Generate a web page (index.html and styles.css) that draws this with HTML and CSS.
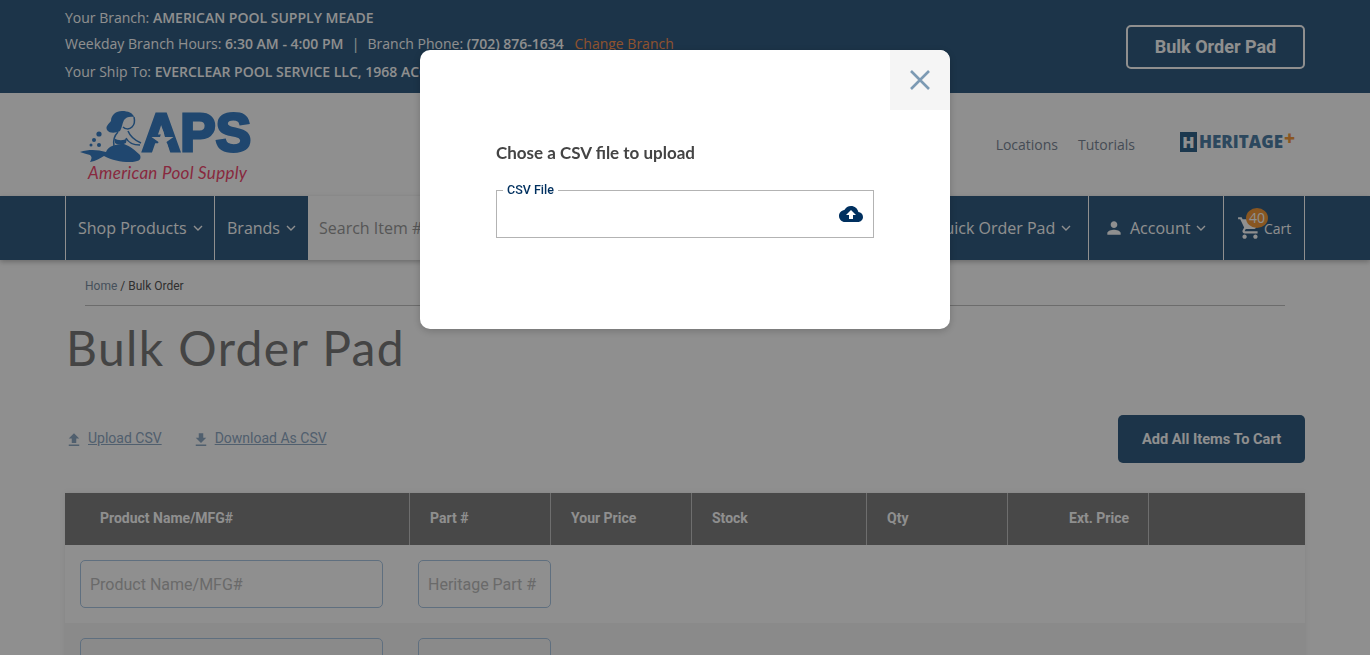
FILE: index.html
```html
<!DOCTYPE html>
<html>
    <head>
        <title> Bulk Order Pad </title>
        <link rel="stylesheet" href="styles.css">
    </head>
    <body>
        <div class="topbar">
            <div class="branch-info">
                <div class="info-line">Your Branch: <b>AMERICAN POOL SUPPLY MEADE</b></div>
                <div class="info-line hours-line">Weekday Branch Hours: <b>6:30 AM - 4:00 PM</b> <span class="sep">|</span> Branch Phone: <b>(702) 876-1634</b> <a class="change-link">Change Branch</a></div>
                <div class="info-line">Your Ship To: <b>EVERCLEAR POOL SERVICE LLC, 1968 ACCESS WAY</b></div>
            </div>
            <a class="bulk-button">Bulk Order Pad</a>
        </div>

        <div class="logo-row">
            <svg class="logo" width="176" height="92" viewBox="0 -12 176 92">
                <path class="logo-blue" d="M2 44C12 41 20 42 28 44C30 38 38 36 46 36C52 38 58 43 62 47C64 52 60 54 52 54C42 54 34 52 26 48C22 50 18 53 12 54C14 50 14 49 12 47C8 46 5 45 2 44Z"/>
                <path class="logo-blue" d="M29 22C27 18 31 16 33 13C33 7 38 3 44 3C50 3 55 5 56 9C52 8 48 9 46 12C44 16 44 20 42 23C38 25 32 26 29 22Z"/>
                <path class="logo-blue" d="M36 30C40 33 46 33 49 30L48 35C44 37 40 37 37 35Z"/>
                <path class="logo-line" d="M56 9C57 13 56 17 54 19C51 22 47 21 45 19M40 24C36 28 35 33 36 38M50 23C52 28 56 32 63 35M48 30C50 34 55 37 62 37"/>
                <circle class="logo-blue" cx="21" cy="26" r="2.6"/>
                <circle class="logo-blue" cx="16" cy="32" r="2"/>
                <circle class="logo-blue" cx="21" cy="37" r="2"/>
                <circle class="logo-blue" cx="13" cy="37" r="1.5"/>
                <text class="logo-aps" x="64" y="43" textLength="109" lengthAdjust="spacingAndGlyphs">APS</text>
                <polygon class="logo-star" points="84.5,21 87,29 95.5,29 88.5,34 91,42 84.5,37 78,42 80.5,34 73.5,29 82,29"/>
                <text class="logo-name" x="10" y="71" textLength="159">American Pool Supply</text>
            </svg>
            <div class="top-links">
                <a>Locations</a>
                <a>Tutorials</a>
            </div>
            <div class="heritage">
                <span class="heritage-box">H</span><span class="heritage-text">HERITAGE</span><span class="heritage-plus">+</span>
            </div>
        </div>

        <div class="nav">
            <div class="nav-cell shop">Shop Products <svg class="chev" viewBox="0 0 12 12"><path d="M2 4l4 4 4-4"/></svg></div>
            <div class="nav-cell brands">Brands <svg class="chev" viewBox="0 0 12 12"><path d="M2 4l4 4 4-4"/></svg></div>
            <div class="nav-search">Search Item #</div>
            <div class="nav-cell quick">Quick Order Pad <svg class="chev" viewBox="0 0 12 12"><path d="M2 4l4 4 4-4"/></svg></div>
            <div class="nav-cell account">
                <svg class="person" viewBox="0 0 24 24"><path d="M12 12c2.21 0 4-1.79 4-4s-1.79-4-4-4-4 1.79-4 4 1.79 4 4 4zm0 2c-2.67 0-8 1.34-8 4v2h16v-2c0-2.66-5.33-4-8-4z"/></svg>
                Account <svg class="chev" viewBox="0 0 12 12"><path d="M2 4l4 4 4-4"/></svg>
            </div>
            <div class="nav-cell cart">
                <svg class="cart-icon" viewBox="0 0 24 24"><path d="M7 18c-1.1 0-1.99.9-1.99 2S5.9 22 7 22s2-.9 2-2-.9-2-2-2zM1 2v2h2l3.6 7.59-1.35 2.45c-.16.28-.25.61-.25.96 0 1.1.9 2 2 2h12v-2H7.42c-.14 0-.25-.11-.25-.25l.03-.12.9-1.63h7.45c.75 0 1.41-.41 1.75-1.03l3.58-6.49c.08-.14.12-.31.12-.48 0-.55-.45-1-1-1H5.21l-.94-2H1zm16 16c-1.1 0-1.99.9-1.99 2s.89 2 1.99 2 2-.9 2-2-.9-2-2-2z"/></svg>
                <span class="cart-badge">40</span>
                <span class="cart-text">Cart</span>
            </div>
        </div>

        <div class="content">
            <div class="breadcrumb"><a>Home</a> / <span>Bulk Order</span></div>
            <h1>Bulk Order Pad</h1>

            <div class="actions">
                <a class="action-link"><svg viewBox="0 0 24 24"><path d="M9 16h6v-6h4l-7-7-7 7h4zm-4 2h14v2H5z"/></svg><span>Upload CSV</span></a>
                <a class="action-link"><svg viewBox="0 0 24 24"><path d="M19 9h-4V3H9v6H5l7 7 7-7zM5 18v2h14v-2H5z"/></svg><span>Download As CSV</span></a>
                <a class="add-all">Add All Items To Cart</a>
            </div>

            <div class="order-table">
                <div class="table-head">
                    <div class="th first">Product Name/MFG#</div>
                    <div class="th">Part #</div>
                    <div class="th">Your Price</div>
                    <div class="th">Stock</div>
                    <div class="th">Qty</div>
                    <div class="th price">Ext. Price</div>
                    <div class="th last"></div>
                </div>
                <div class="table-row">
                    <div class="field name-field">Product Name/MFG#</div>
                    <div class="field part-field">Heritage Part #</div>
                </div>
                <div class="table-row alt">
                    <div class="field name-field"></div>
                    <div class="field part-field"></div>
                </div>
            </div>
        </div>

        <div class="overlay">
            <div class="modal">
                <div class="modal-close">
                    <svg viewBox="0 0 20 20" width="20" height="20"><path d="M1 1l18 18M19 1L1 19"/></svg>
                </div>
                <h3>Chose a CSV file to upload</h3>
                <fieldset class="file-box">
                    <legend>CSV File</legend>
                    <svg class="cloud" viewBox="0 0 24 24"><path d="M19.35 10.04C18.67 6.59 15.64 4 12 4 9.11 4 6.6 5.64 5.35 8.04 2.34 8.36 0 10.91 0 14c0 3.31 2.69 6 6 6h13c2.76 0 5-2.24 5-5 0-2.64-2.05-4.78-4.65-4.96zM14 13v4h-4v-4H7l5-5 5 5h-3z"/></svg>
                </fieldset>
            </div>
        </div>
    </body>
</html>
```

FILE: styles.css
```css
html, body {
    height: 655px;
    overflow: hidden;
}
body {
    margin: 0;
    font-family: "Open Sans", sans-serif;
    background-color: #ffffff;
    color: #7d7d7d;
}
a {
    color: inherit;
}

.topbar {
    height: 93px;
    box-sizing: border-box;
    padding: 4px 65px 0;
    display: flex;
    justify-content: space-between;
    background-color: #325d82;
    color: #ffffff;
    font-size: 14px;
}
.info-line {
    height: 27px;
    line-height: 27px;
    white-space: nowrap;
}
.info-line b {
    font-weight: 600;
}
.hours-line {
    height: 28px;
    margin-top: -1px;
}
.sep {
    margin: 0 4.5px;
}
.change-link {
    margin-left: 7px;
    color: #ff9452;
}
.bulk-button {
    width: 179px;
    height: 44px;
    margin-top: 21px;
    box-sizing: border-box;
    border: 2px solid #ffffff;
    border-radius: 5px;
    text-align: center;
    line-height: 40px;
    font-family: Roboto, sans-serif;
    font-weight: 700;
    font-size: 18px;
}

.logo-row {
    height: 102px;
    box-sizing: border-box;
    padding: 3px 65px 0 78px;
    display: flex;
}
.logo-blue {
    fill: #397fc6;
}
.logo-line {
    fill: none;
    stroke: #397fc6;
    stroke-width: 1.5;
}
.logo-aps {
    font-family: "Liberation Sans", sans-serif;
    font-weight: 700;
    font-size: 54px;
    fill: #397fc6;
    stroke: #397fc6;
    stroke-width: 3;
}
.logo-star {
    fill: #ffffff;
}
.logo-name {
    font-family: Lato, sans-serif;
    font-style: italic;
    font-size: 17px;
    fill: #f24a70;
}
.top-links {
    margin-left: auto;
    padding-top: 39px;
    display: flex;
    gap: 20px;
    font-size: 14px;
    color: #7c8898;
}
.heritage {
    width: 125px;
    margin-left: 45px;
    padding-top: 36px;
    display: flex;
    align-items: flex-start;
    font-family: "Open Sans", sans-serif;
    font-weight: 800;
    color: #4f80a8;
}
.heritage-box {
    width: 17px;
    height: 20px;
    margin-right: 2px;
    background-color: #33648c;
    color: #ffffff;
    font-size: 16px;
    line-height: 20px;
    text-align: center;
}
.heritage-text {
    font-size: 17px;
    line-height: 20px;
}
.heritage-plus {
    margin-top: -4px;
    margin-left: 1px;
    color: #f49a3c;
    font-size: 19px;
    line-height: 20px;
}

.nav {
    height: 64px;
    margin-top: 1px;
    padding: 0 65px;
    display: flex;
    background-color: #325d82;
    color: #ffffff;
    font-size: 16px;
    box-shadow: 0 2px 5px rgba(0, 0, 0, 0.25);
}
.nav-cell {
    flex: none;
    display: flex;
    align-items: center;
    box-sizing: border-box;
    border-right: 1px solid #ffffff;
    white-space: nowrap;
}
.shop {
    width: 150px;
    padding-left: 12px;
    border-left: 1px solid #ffffff;
}
.brands {
    width: 93px;
    padding-left: 12px;
    border-right: none;
}
.nav-search {
    flex: none;
    width: 622px;
    box-sizing: border-box;
    padding-left: 11px;
    line-height: 64px;
    background-color: #ffffff;
    color: #9a9a9a;
}
.quick {
    width: 159px;
    padding-left: 2px;
}
.account {
    width: 135px;
    padding-left: 15px;
}
.cart {
    width: 81px;
    padding-left: 13px;
    position: relative;
    font-size: 14px;
}
.cart-text {
    margin-left: 1px;
}
.chev {
    width: 12px;
    height: 12px;
    margin-left: 5px;
    fill: none;
    stroke: #ffffff;
    stroke-width: 1.4;
}
.person {
    width: 20px;
    height: 20px;
    margin-right: 6px;
    fill: #ffffff;
}
.cart-icon {
    width: 26px;
    height: 26px;
    fill: #ffffff;
}
.cart-badge {
    position: absolute;
    left: 22px;
    top: 12px;
    width: 22px;
    height: 20px;
    border-radius: 50%;
    background-color: #f39a3c;
    color: #ffffff;
    font-size: 14px;
    line-height: 20px;
    text-align: center;
}

.content {
    height: 395px;
    overflow: hidden;
    padding: 0 65px;
}
.breadcrumb {
    height: 46px;
    margin: 0 20px;
    box-sizing: border-box;
    padding-top: 19px;
    border-bottom: 1px solid #c0c0c0;
    font-family: Roboto, sans-serif;
    font-size: 12px;
    line-height: 14px;
    color: #555555;
}
.breadcrumb a {
    color: #7d8fa3;
}
h1 {
    margin: 13px 0 0 1px;
    font-family: Lato, sans-serif;
    font-weight: 400;
    font-size: 48px;
    letter-spacing: 1.4px;
    line-height: 58px;
    color: #7a7a7a;
}
.actions {
    height: 48px;
    margin-top: 38px;
    display: flex;
    align-items: center;
    gap: 30px;
    font-family: Roboto, sans-serif;
    font-size: 14px;
}
.action-link {
    display: flex;
    align-items: center;
    color: #8fa9c4;
}
.action-link span {
    margin-bottom: 2px;
    text-decoration: underline;
}
.action-link svg {
    width: 18px;
    height: 18px;
    margin: 2px 5px 0 0;
    fill: #8fa9c4;
}
.add-all {
    width: 187px;
    height: 48px;
    margin-left: auto;
    border-radius: 5px;
    background-color: #325d82;
    color: #ffffff;
    font-weight: 700;
    font-size: 14.6px;
    line-height: 48px;
    text-align: center;
}

.order-table {
    margin-top: 30px;
    box-shadow: 0 0 6px rgba(0, 0, 0, 0.08);
    font-family: Roboto, sans-serif;
}
.table-head {
    height: 52px;
    display: grid;
    grid-template-columns: 345px 141px 141px 175px 141px 141px 1fr;
    background-color: #808080;
    color: #ffffff;
    font-weight: 700;
    font-size: 14px;
}
.th {
    padding-left: 20px;
    border-right: 1px solid #c4c4c4;
    line-height: 50px;
}
.th.first {
    padding-left: 35px;
}
.th.price {
    padding: 0 19px 0 0;
    text-align: right;
}
.th.last {
    border-right: none;
}
.table-row {
    height: 78px;
    box-sizing: border-box;
    padding: 15px 0 0 15px;
    display: flex;
}
.table-row.alt {
    background-color: #f6f6f6;
}
.field {
    height: 48px;
    box-sizing: border-box;
    padding-left: 9px;
    border: 1px solid #a9c6e3;
    border-radius: 5px;
    color: #bdbdbd;
    font-size: 16px;
    line-height: 47px;
    white-space: nowrap;
}
.name-field {
    width: 303px;
}
.part-field {
    width: 133px;
    margin-left: 35px;
}

.overlay {
    position: fixed;
    inset: 0;
    display: flex;
    justify-content: center;
    align-items: flex-start;
    padding-top: 50px;
    background-color: rgba(0, 0, 0, 0.44);
}
.modal {
    width: 530px;
    height: 279px;
    box-sizing: border-box;
    padding: 93px 76px 0;
    position: relative;
    border-radius: 10px;
    background-color: #ffffff;
    box-shadow: 0 2px 8px rgba(0, 0, 0, 0.2);
    overflow: hidden;
}
.modal-close {
    position: absolute;
    top: 0;
    right: 0;
    width: 60px;
    height: 60px;
    display: flex;
    justify-content: center;
    align-items: center;
    background-color: #f5f5f5;
}
.modal-close path {
    fill: none;
    stroke: #7c9ab3;
    stroke-width: 2.6;
}
h3 {
    margin: 0;
    font-family: Lato, sans-serif;
    font-weight: 700;
    font-size: 17px;
    line-height: 20px;
    color: #444444;
}
.file-box {
    height: 55px;
    margin: 20px 0 0;
    padding: 0 10px 0 6px;
    box-sizing: border-box;
    display: flex;
    justify-content: flex-end;
    border: 1px solid #b3b3b3;
}
legend {
    padding: 0 4px;
    font-family: Roboto, sans-serif;
    font-weight: 500;
    font-size: 12.5px;
    line-height: 14px;
    color: #00305f;
}
.cloud {
    width: 24px;
    height: 24px;
    margin-top: 5px;
    fill: #00305f;
}
```
